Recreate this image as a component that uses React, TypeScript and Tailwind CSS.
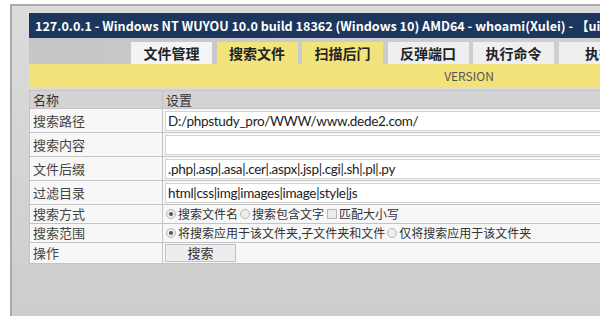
import React from 'react';

const cjk = "font-['Noto_Sans_CJK_SC','Noto_Sans',sans-serif]";

const tabs = [
  { name: '文件管理', bg: 'bg-[#f4f4f4]' },
  { name: '搜索文件', bg: 'bg-[#f2e47c]' },
  { name: '扫描后门', bg: 'bg-[#f2e47c]' },
  { name: '反弹端口', bg: 'bg-[#efefef]' },
  { name: '执行命令', bg: 'bg-[#efefef]' },
  { name: '执行', bg: 'bg-[#efefef]' },
];

const inputs = [
  { label: '搜索路径', value: 'D:/phpstudy_pro/WWW/www.dede2.com/' },
  { label: '搜索内容', value: '' },
  { label: '文件后缀', value: '.php|.asp|.asa|.cer|.aspx|.jsp|.cgi|.sh|.pl|.py' },
  { label: '过滤目录', value: 'html|css|img|images|image|style|js' },
];

function Radio({ checked }: { checked?: boolean }) {
  return (
    <span className="mr-[2px] inline-flex h-[10px] w-[10px] items-center justify-center rounded-full border border-[#b8b8b8] bg-[#ececec]">
      {checked && <span className="h-[4px] w-[4px] rounded-full bg-[#555]" />}
    </span>
  );
}

function LabelCell({ children }: { children: React.ReactNode }) {
  return (
    <td className="w-[133px] border border-[#c4c4c4] bg-[#f7f7f7] p-0 pl-[3px] align-middle text-[13px] leading-[16px] text-[#444]">
      {children}
    </td>
  );
}

export default function App() {
  return (
    <div className={`h-[316px] w-[600px] overflow-hidden bg-white pl-[10px] pt-[4px] ${cjk}`}>
      <div className="h-full overflow-hidden border-l-2 border-t-2 border-[#a9a9a9] bg-gradient-to-b from-[#dcdcdc] to-[#cdcdcd] pl-[17px] pt-[7px]">
        <div className="w-[880px]">
          <div className="h-[25px] whitespace-nowrap bg-[#1c365d] pl-[6px] text-[12.6px] font-semibold leading-[25px] text-white">
            127.0.0.1 - Windows NT WUYOU 10.0 build 18362 (Windows 10) AMD64 - whoami(Xulei) - 【uid:0】
          </div>
          <div className="flex h-[26px] items-end gap-[4.5px] bg-gradient-to-r from-[#c6c6c6] to-[#d4d4d4] pl-[102px]">
            {tabs.map((t) => (
              <div
                key={t.name}
                className={`flex h-[22px] w-[81px] items-center justify-center text-[14px] font-bold text-[#222] ${t.bg}`}
              >
                {t.name}
              </div>
            ))}
          </div>
          <div className="flex h-[24px] items-center justify-center bg-[#f1e37a] text-[12px] text-[#555]">
            VERSION
          </div>
          <table className="mt-[2px] w-full border-collapse">
            <tbody>
              <tr className="h-[18px] bg-[#d3d3d3] text-[13px] leading-[16px] text-[#333]">
                <td className="w-[133px] border border-[#c4c4c4] p-0 pl-[3px]">名称</td>
                <td className="border border-[#c4c4c4] p-0 pl-[3px]">设置</td>
              </tr>
              {inputs.map((r) => (
                <tr key={r.label} className="h-[24px]">
                  <LabelCell>{r.label}</LabelCell>
                  <td className="border border-[#c4c4c4] bg-[#f7f7f7] p-0 px-[2px]">
                    <div className="h-[20px] whitespace-nowrap border border-[#d2d2d2] bg-white pl-[2px] font-['Lato',sans-serif] text-[13.5px] leading-[18px] tracking-[-0.3px] text-[#222]">
                      {r.value}
                    </div>
                  </td>
                </tr>
              ))}
              <tr className="h-[19px]">
                <LabelCell>搜索方式</LabelCell>
                <td className="border border-[#c4c4c4] bg-[#f7f7f7] p-0 pl-[3px] text-[12px] leading-[14px] text-[#333]">
                  <div className="flex items-center whitespace-nowrap">
                    <Radio checked />
                    <span>搜索文件名</span>
                    <span className="ml-[2px]" />
                    <Radio />
                    <span>搜索包含文字</span>
                    <span className="ml-[3px] mr-[2px] inline-block h-[10px] w-[10px] border border-[#b8b8b8] bg-[#ececec]" />
                    <span>匹配大小写</span>
                  </div>
                </td>
              </tr>
              <tr className="h-[19px]">
                <LabelCell>搜索范围</LabelCell>
                <td className="border border-[#c4c4c4] bg-[#f7f7f7] p-0 pl-[3px] text-[12px] leading-[14px] text-[#333]">
                  <div className="flex items-center whitespace-nowrap">
                    <Radio checked />
                    <span>将搜索应用于该文件夹,子文件夹和文件</span>
                    <span className="ml-[2px]" />
                    <Radio />
                    <span>仅将搜索应用于该文件夹</span>
                  </div>
                </td>
              </tr>
              <tr className="h-[21px]">
                <LabelCell>操作</LabelCell>
                <td className="border border-[#c4c4c4] bg-[#f7f7f7] p-0 px-[2px]">
                  <button className="block h-[18px] w-[71px] border border-[#c2c2c2] bg-[#ededed] text-[13px] leading-[16px] text-[#333]">
                    搜索
                  </button>
                </td>
              </tr>
            </tbody>
          </table>
        </div>
      </div>
    </div>
  );
}
